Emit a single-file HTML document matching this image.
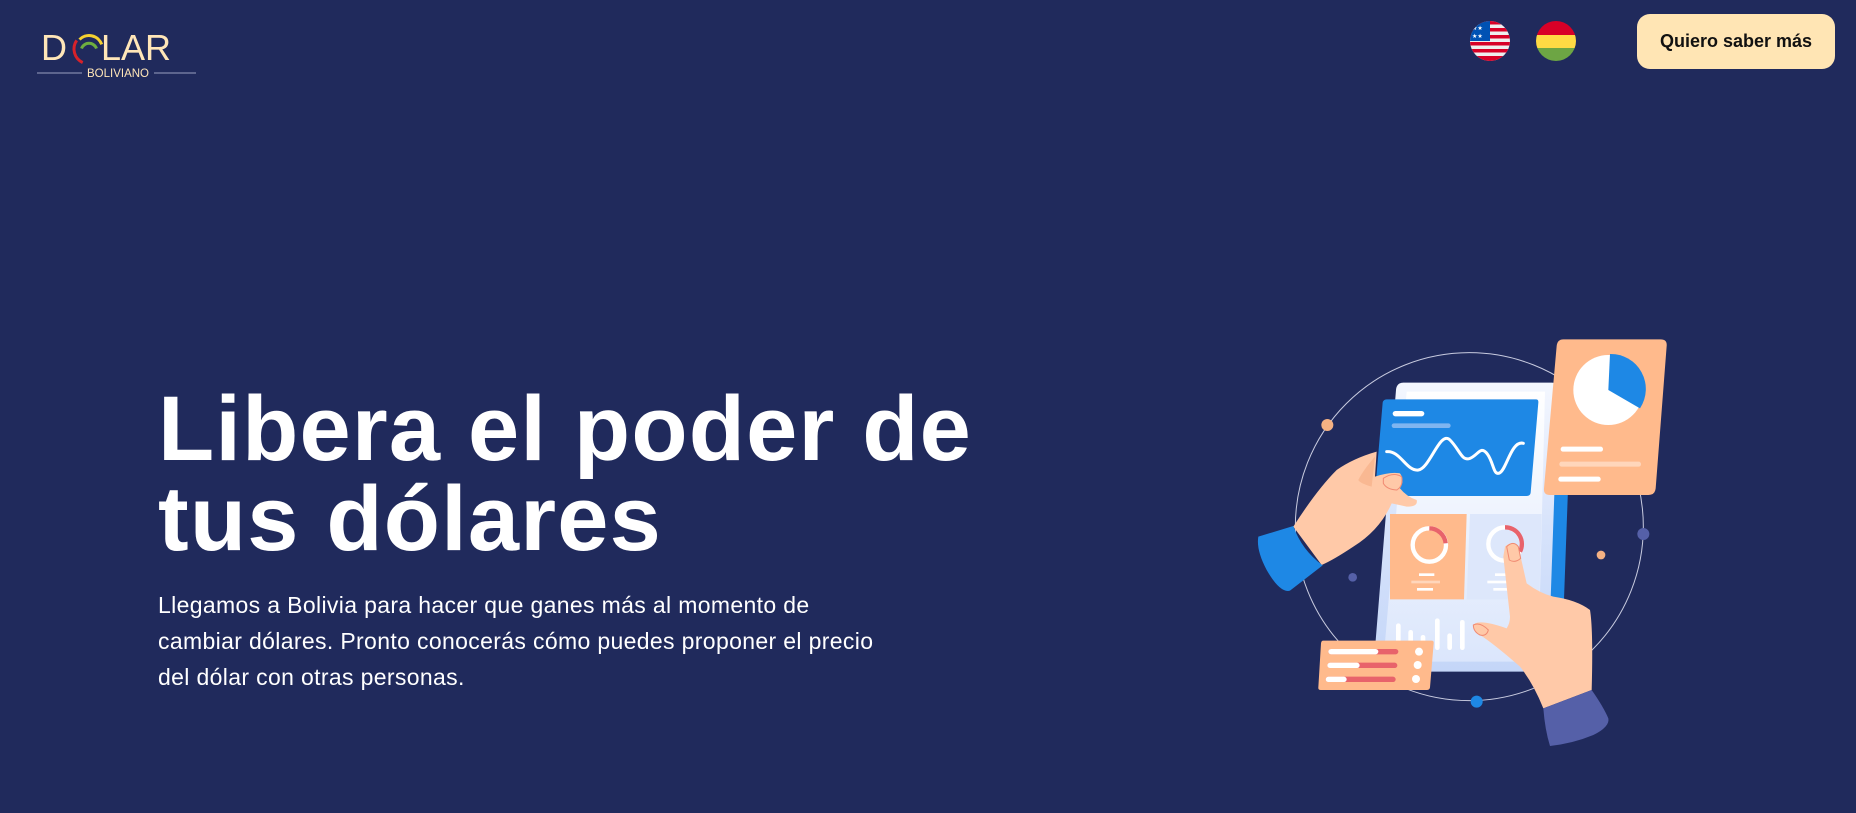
<!DOCTYPE html>
<html><head><meta charset="utf-8"><style>
html,body{margin:0;padding:0}
body{width:1856px;height:813px;background:#202a5c;position:relative;overflow:hidden;font-family:"Liberation Sans",sans-serif}
.abs{position:absolute}
h1{position:absolute;left:158px;top:384px;margin:0;font-size:92px;line-height:90px;font-weight:bold;color:#fff;letter-spacing:1.2px;white-space:nowrap}
p.t{position:absolute;left:158px;top:587px;margin:0;font-size:23px;line-height:36px;color:#fff;letter-spacing:0.35px;white-space:nowrap}
.btn{position:absolute;left:1637px;top:14px;width:198px;height:55px;background:#ffe5b4;border-radius:13px;color:#111;font-size:18px;font-weight:bold;display:flex;align-items:center;justify-content:center}
</style></head><body>
<svg class="abs" style="left:30px;top:20px" width="180" height="65" viewBox="0 0 180 65">
<text x="11" y="40" font-family="Liberation Sans,sans-serif" font-size="36" fill="#ffe6b8">D</text>
<g transform="translate(1,4)">
<path d="M51.7 38.6 A15 15 0 0 1 45.7 16.4" stroke="#d7222a" stroke-width="3" fill="none"/>
<path d="M48.5 15.5 A13.5 13.5 0 0 1 70.7 20.4" stroke="#f5d130" stroke-width="3" fill="none"/>
<path d="M50.5 24.5 A8 8 0 0 1 65.5 24.5" stroke="#6fae3f" stroke-width="3" fill="none"/>
</g>
<text x="71" y="40" font-family="Liberation Sans,sans-serif" font-size="36" fill="#ffe6b8">LAR</text>
<line x1="7" y1="53" x2="52" y2="53" stroke="#9aa0c0" stroke-width="1"/>
<line x1="124" y1="53" x2="166" y2="53" stroke="#9aa0c0" stroke-width="1"/>
<text x="88" y="57" text-anchor="middle" font-family="Liberation Sans,sans-serif" font-size="11.5" fill="#ffe6b8">BOLIVIANO</text>
</svg>
<svg class="abs" style="left:1470px;top:21px" width="110" height="42" viewBox="0 0 110 42">
<defs><clipPath id="c1"><circle cx="20" cy="20" r="20"/></clipPath><clipPath id="c2"><circle cx="86" cy="20" r="20"/></clipPath></defs>
<g clip-path="url(#c1)"><rect width="40" height="40" fill="#eee"/>
<rect y="0" width="40" height="3.5" fill="#d80027"/><rect y="7" width="40" height="3.5" fill="#d80027"/><rect y="14" width="40" height="3.5" fill="#d80027"/><rect y="21" width="40" height="3.5" fill="#d80027"/><rect y="28" width="40" height="3.5" fill="#d80027"/><rect y="35" width="40" height="5" fill="#d80027"/>
<rect width="20" height="20" fill="#0052b4"/><text x="2" y="9" font-size="6" fill="#fff">★★</text><text x="2" y="17" font-size="6" fill="#fff">★★</text></g>
<g clip-path="url(#c2)"><rect x="66" y="0" width="40" height="14" fill="#d80027"/><rect x="66" y="14" width="40" height="13" fill="#ffda44"/><rect x="66" y="27" width="40" height="14" fill="#6da544"/></g>
</svg>
<div class="btn">Quiero saber más</div>
<h1>Libera el poder de<br>tus dólares</h1>
<p class="t">Llegamos a Bolivia para hacer que ganes más al momento de<br>cambiar dólares. Pronto conocerás cómo puedes proponer el precio<br>del dólar con otras personas.</p>
<svg class="abs" style="left:1240px;top:330px" width="450" height="420" viewBox="0 0 1350 1260">
<defs><linearGradient id="tg" x1="0" y1="0" x2="0" y2="1"><stop offset="0" stop-color="#f4f7fe"/><stop offset="0.5" stop-color="#d7e3fb"/><stop offset="1" stop-color="#c4d6f8"/></linearGradient>
<linearGradient id="sg" x1="0" y1="0" x2="0" y2="1"><stop offset="0" stop-color="#ffffff"/><stop offset="1" stop-color="#dbe6fc"/></linearGradient></defs>
<circle cx="688" cy="590" r="522" stroke="#c9cce0" stroke-width="3" fill="none"/>
<circle cx="262" cy="285" r="18" fill="#f4b183"/>
<circle cx="338" cy="742" r="13" fill="#5560a8"/>
<circle cx="1210" cy="612" r="18" fill="#5560a8"/>
<circle cx="1083" cy="675" r="13" fill="#f4b183"/>
<circle cx="710" cy="1115" r="18" fill="#1e88e5"/>
<path d="M930 175 L995 175 L965 1000 L900 1000 Z" fill="#1e88e5"/>
<path d="M490 158 L935 158 Q955 158 954 180 L925 1005 Q924 1025 905 1025 L420 1025 Q400 1025 401 1005 L468 180 Q470 158 490 158 Z" fill="url(#tg)"/>
<path d="M500 185 L915 185 L895 995 L430 995 Z" fill="url(#sg)"/>
<path d="M450 552 L680 552 L672 808 L450 808 Z" fill="#ffba8c"/>
<path d="M690 552 L905 552 L898 808 L680 808 Z" fill="#dde7fb"/>
<circle cx="568" cy="645" r="50" stroke="#fff" stroke-width="13" fill="none"/>
<path d="M568 595 A50 50 0 0 1 617 640" stroke="#e8636b" stroke-width="13" fill="none"/>
<rect x="537" y="730" width="46" height="8" fill="#fff"/><rect x="514" y="752" width="86" height="8" fill="#ffd6bb"/><rect x="531" y="774" width="48" height="8" fill="#fff"/>
<circle cx="795" cy="642" r="50" stroke="#fff" stroke-width="13" fill="none"/>
<path d="M795 592 A50 50 0 0 1 840 665" stroke="#e8636b" stroke-width="13" fill="none"/>
<rect x="765" y="730" width="46" height="8" fill="#fff"/><rect x="742" y="752" width="86" height="8" fill="#fff"/><rect x="760" y="774" width="48" height="8" fill="#fff"/>
<g fill="#fff"><rect x="468" y="880" width="14" height="80" rx="7"/><rect x="505" y="900" width="14" height="60" rx="7"/><rect x="542" y="915" width="14" height="45" rx="7"/><rect x="585" y="865" width="14" height="95" rx="7"/><rect x="622" y="910" width="14" height="50" rx="7"/><rect x="660" y="870" width="14" height="90" rx="7"/></g>
<path d="M440 208 L888 208 Q896 208 895 218 L872 488 Q871 498 860 498 L415 498 Q404 498 405 488 L428 218 Q430 208 440 208 Z" fill="#1e88e5"/>
<rect x="458" y="243" width="95" height="16" rx="8" fill="#fff"/>
<rect x="455" y="280" width="177" height="14" rx="7" fill="#7fb5f0"/>
<path d="M440 365 C480 360 500 425 535 420 S600 300 630 330 S665 395 690 385 S722 345 742 372 S760 440 780 428 S815 330 850 340" stroke="#fff" stroke-width="9" fill="none" stroke-linecap="round"/>
<path d="M970 28 L1262 28 Q1282 28 1280 48 L1247 475 Q1245 495 1225 495 L930 495 Q910 495 912 475 L950 48 Q952 28 970 28 Z" fill="#ffba8c"/>
<circle cx="1105" cy="180" r="105" fill="#fff"/>
<path d="M1105 180 L1110 72 A105 105 0 0 1 1200 235 Z" fill="#1e88e5"/>
<rect x="962" y="350" width="127" height="15" rx="7" fill="#fff"/>
<rect x="958" y="395" width="245" height="15" rx="7" fill="#ffd6bb"/>
<rect x="955" y="440" width="127" height="15" rx="7" fill="#fff"/>
<path d="M250 932 L575 932 Q582 932 581 940 L570 1072 Q569 1080 560 1080 L242 1080 Q234 1080 235 1072 L243 940 Q244 932 250 932 Z" fill="#ffba8c"/>
<rect x="265" y="957" width="210" height="16" rx="8" fill="#e8636b"/><rect x="265" y="957" width="150" height="16" rx="8" fill="#fff"/>
<rect x="262" y="998" width="210" height="16" rx="8" fill="#e8636b"/><rect x="262" y="998" width="97" height="16" rx="8" fill="#fff"/>
<rect x="257" y="1040" width="210" height="16" rx="8" fill="#e8636b"/><rect x="257" y="1040" width="63" height="16" rx="8" fill="#fff"/>
<circle cx="537" cy="965" r="12" fill="#fff"/><circle cx="533" cy="1005" r="12" fill="#fff"/><circle cx="528" cy="1047" r="12" fill="#fff"/>
<path d="M160 590 Q230 480 290 420 Q340 385 410 365 L405 440 Q450 425 480 430 Q495 450 480 475 Q500 500 530 510 Q535 530 500 530 L455 520 Q420 600 340 650 Q280 690 245 705 Z" fill="#ffc9a8"/>
<path d="M405 380 L395 470 Q360 460 355 450 Q370 420 405 380 Z" fill="#f9b892"/>
<path d="M430 445 Q460 425 485 440 Q490 470 470 480 Q440 478 430 460 Z" fill="#ffc9a8" stroke="#f08a72" stroke-width="3"/>
<path d="M55 620 L160 588 Q185 660 248 706 L150 782 Q120 790 80 720 Q48 660 55 620 Z" fill="#1e88e5"/>
<path d="M795 650 Q815 630 835 650 L860 760 Q900 790 940 800 Q1010 810 1050 840 Q1060 900 1055 1080 L910 1135 Q880 1060 840 1010 Q760 940 720 915 Q690 895 705 880 Q730 870 800 895 Q810 880 810 860 L790 680 Z" fill="#ffc9a8"/>
<path d="M800 650 Q820 630 835 650 L842 685 Q825 700 808 690 Z" fill="#ffc9a8" stroke="#f08a72" stroke-width="3"/>
<path d="M700 885 Q720 875 745 900 Q740 920 720 915 Q700 905 700 885 Z" fill="#ffc9a8" stroke="#f08a72" stroke-width="3"/>
<path d="M910 1135 L1055 1080 Q1090 1130 1105 1165 Q1110 1190 1060 1215 Q1000 1240 930 1248 Q915 1200 910 1135 Z" fill="#5560a8"/>
</svg>
</body></html>
